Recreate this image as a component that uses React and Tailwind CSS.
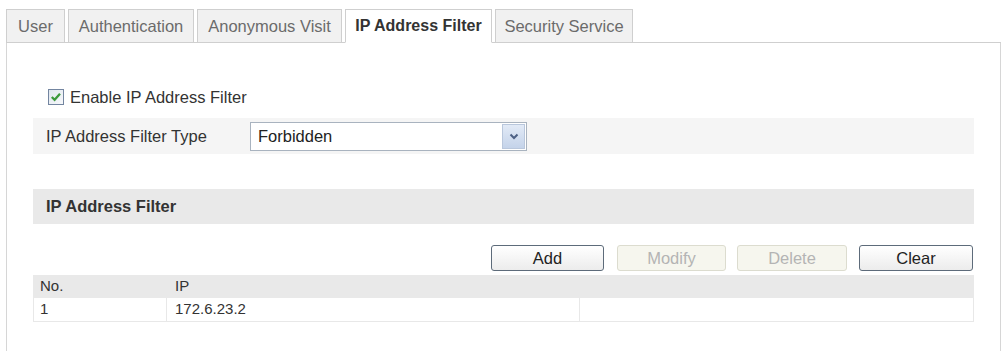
import React from "react";

const tabs = [
  { label: "User", w: "w-[59px]" },
  { label: "Authentication", w: "w-[126px]" },
  { label: "Anonymous Visit", w: "w-[145px]" },
  { label: "IP Address Filter", w: "w-[147px]", active: true },
  { label: "Security Service", w: "w-[138px]" },
];

function Tab({ label, w, active }) {
  return (
    <div
      className={`${w} h-[34px] -mb-px flex items-center justify-center border border-[#cfcfcf] ${
        active
          ? "bg-white border-b-white font-bold text-[#333] text-[16px]"
          : "bg-[#f1f1f1] text-[#6b6b6b]"
      }`}
    >
      {label}
    </div>
  );
}

function Checkbox() {
  return (
    <svg width="16" height="16" viewBox="0 0 16 16">
      <defs>
        <linearGradient id="cb" x1="0" y1="0" x2="1" y2="1">
          <stop offset="0" stopColor="#dfe6ee" />
          <stop offset="1" stopColor="#f8f9fb" />
        </linearGradient>
      </defs>
      <rect x="0.5" y="0.5" width="15" height="15" fill="url(#cb)" stroke="#7385a0" />
      <path d="M3.8 8 L6.6 10.8 L12 4.8" fill="none" stroke="#3c9a3c" strokeWidth="2.3" />
    </svg>
  );
}

function Button({ label, w, disabled }) {
  return (
    <button
      type="button"
      className={`${w} h-[26px] rounded-[3px] border ${
        disabled
          ? "border-[#dcdccf] bg-[#f6f6ee] text-[#b4b4b4]"
          : "border-[#5d6b7a] bg-gradient-to-b from-white to-[#ececec] text-[#222]"
      }`}
    >
      {label}
    </button>
  );
}

export default function App() {
  return (
    <div className="w-[1004px] h-[351px] overflow-hidden bg-white font-['Liberation_Sans',Arial,sans-serif] text-[16.5px] text-[#333]">
      <div className="pt-[9px] pl-[6px] pr-[3px]">
        <div className="flex items-end gap-[3px] border-b border-[#cfcfcf]">
          {tabs.map((t) => (
            <Tab key={t.label} {...t} />
          ))}
        </div>

        <div className="h-[310px] border-l border-r border-[#d6d6d6] pl-[26px] pr-[26px]">
          <div className="h-[42px]" />
          <div className="flex items-center gap-[6px] h-[24px] pl-[15px]">
            <Checkbox />
            <span>Enable IP Address Filter</span>
          </div>

          <div className="mt-[9px] h-[36px] bg-[#f5f5f5] flex items-center pl-[13px]">
            <span className="w-[204px]">IP Address Filter Type</span>
            <div className="w-[277px] h-[29px] border border-[#a9b3bf] bg-white flex items-center justify-between pl-[7px] pr-[1px]">
              <span className="text-[#222]">Forbidden</span>
              <div className="w-[23px] h-[25px] bg-gradient-to-b from-[#e2eaf6] to-[#c4d3ea] border border-[#b9c7dc] flex items-center justify-center">
                <svg width="10" height="7" viewBox="0 0 10 7">
                  <path d="M1.5 1.5 L5 5 L8.5 1.5" fill="none" stroke="#4d6185" strokeWidth="2" />
                </svg>
              </div>
            </div>
          </div>

          <div className="mt-[35px] h-[35px] bg-[#e9e9e9] flex items-center pl-[13px] font-bold">
            IP Address Filter
          </div>

          <div className="mt-[21px] flex justify-end pr-[1px]">
            <Button label="Add" w="w-[113px]" />
            <div className="w-[13px]" />
            <Button label="Modify" w="w-[109px]" disabled />
            <div className="w-[11px]" />
            <Button label="Delete" w="w-[110px]" disabled />
            <div className="w-[12px]" />
            <Button label="Clear" w="w-[114px]" />
          </div>

          <div className="mt-[4px] text-[15px]">
            <div className="h-[23px] bg-[#e9e9e9] flex items-center">
              <span className="w-[134px] pl-[7px]">No.</span>
              <span className="pl-[8px]">IP</span>
            </div>
            <div className="h-[24px] flex border border-t-0 border-[#e8e8e8] items-stretch">
              <div className="w-[133px] pl-[6px] flex items-center border-r border-[#e8e8e8]">1</div>
              <div className="w-[413px] pl-[8px] flex items-center border-r border-[#e8e8e8]">172.6.23.2</div>
              <div className="flex-1" />
            </div>
          </div>
        </div>
      </div>
    </div>
  );
}
